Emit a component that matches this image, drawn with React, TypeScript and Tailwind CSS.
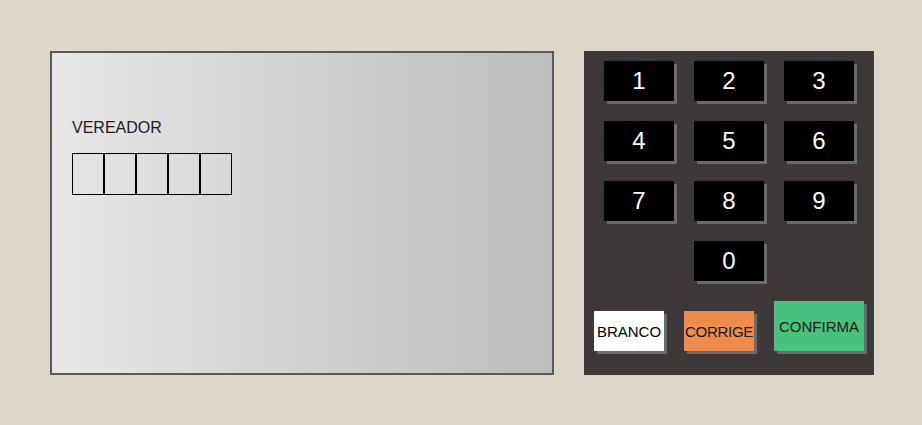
const digits = ["1", "2", "3", "4", "5", "6", "7", "8", "9"]

function Key({ label }: { label: string }) {
  return (
    <button className="w-[70px] h-10 bg-black text-white text-[24px] leading-none shadow-[3px_3px_0_#6b6b6b] flex items-center justify-center">
      {label}
    </button>
  )
}

export default function App() {
  return (
    <div
      className="w-[922px] h-[425px] bg-[#dcd6cb] pl-[50px] pt-[51px] flex gap-[30px]"
      style={{ fontFamily: '"Liberation Sans", Arial, sans-serif' }}
    >
      {/* Tela */}
      <div className="w-[504px] h-[324px] border-2 border-[#595959] bg-gradient-to-r from-[#e6e6e6] to-[#bdbdbd] pl-5 pt-[66px]">
        <div className="text-[16px] leading-[18px] text-[#1c1c1c]">VEREADOR</div>
        <div className="flex mt-4">
          {[0, 1, 2, 3, 4].map((i) => (
            <div key={i} className="w-8 h-[42px] border border-black" />
          ))}
        </div>
      </div>

      {/* Teclado */}
      <div className="w-[290px] h-[324px] bg-[#3e3938] pt-2.5">
        <div className="grid grid-cols-3 gap-5 px-5">
          {digits.map((d) => (
            <Key key={d} label={d} />
          ))}
          <div />
          <Key label="0" />
        </div>
        <div className="flex items-end gap-5 px-2.5 mt-5 text-[15px] leading-none">
          <button className="w-[70px] h-10 bg-white text-black shadow-[3px_3px_0_#6b6b6b] flex items-center justify-center">
            BRANCO
          </button>
          <button className="w-[70px] h-10 bg-[#ee8b4d] text-[#1a1a1a] shadow-[3px_3px_0_#6b6b6b] flex items-center justify-center whitespace-nowrap tracking-[-0.3px]">
            CORRIGE
          </button>
          <button className="w-[90px] h-[50px] bg-[#48c17c] text-[#1a1a1a] shadow-[3px_3px_0_#6b6b6b] flex items-center justify-center">
            CONFIRMA
          </button>
        </div>
      </div>
    </div>
  )
}
